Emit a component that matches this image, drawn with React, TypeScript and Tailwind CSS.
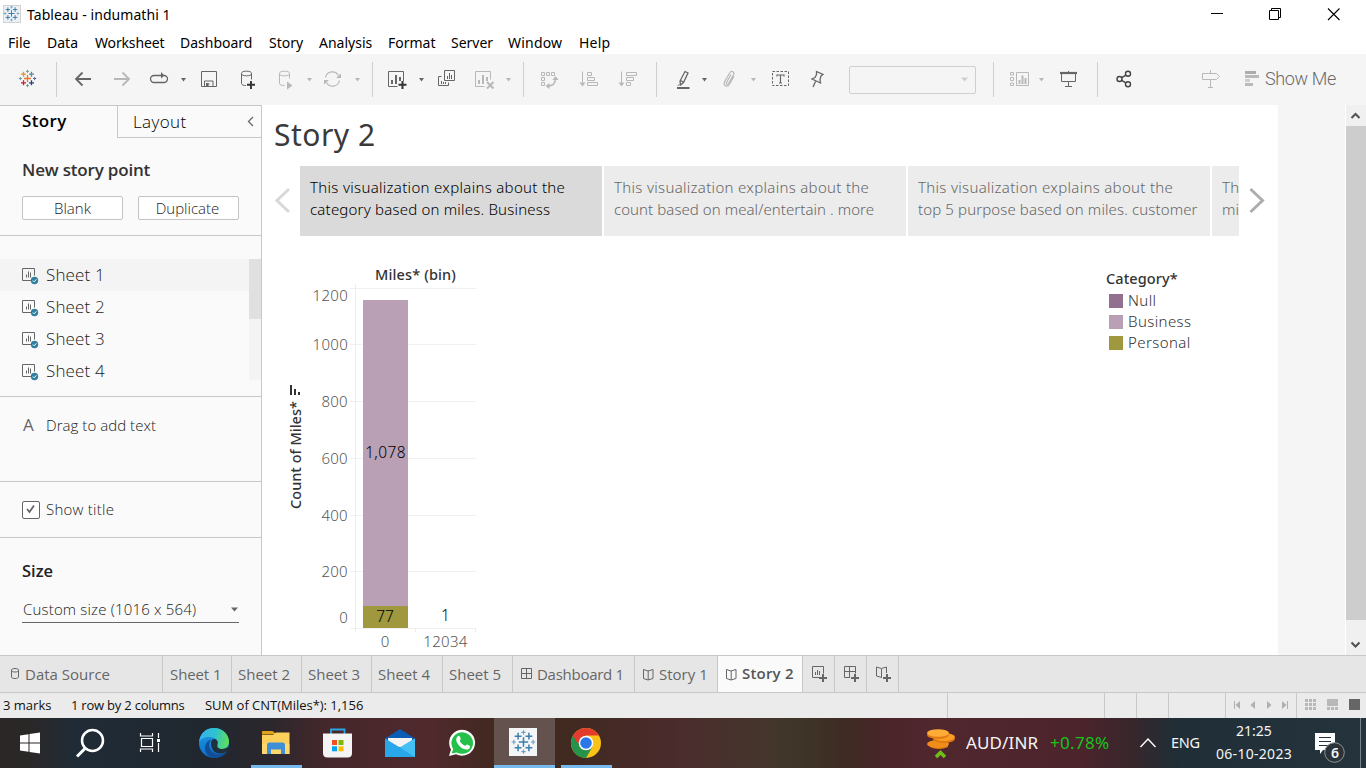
import type { ReactNode } from "react";

type ArtProps = { x: number; y?: number; w: number; h?: number; children?: ReactNode };

/* Icon cell: the viewBox is expressed in window coordinates. */
function Art({ x, y = 67, w, h = 25, children }: ArtProps) {
  return (
    <svg width={w} height={h} viewBox={`${x} ${y} ${w} ${h}`} fill="none" className="block shrink-0">
      {children}
    </svg>
  );
}

const DARK = "#666666";
const PALE = "#b8b8b8";

function Caret({ x, c = DARK }: { x: number; c?: string }) {
  return <path d={`M${x} 78h5l-2.5 3.5z`} fill={c} />;
}

function Sep() {
  return <div className="h-[35px] w-px shrink-0 bg-[#cfcfcf]" />;
}

function Plus({ x, y, r, c, sw }: { x: number; y: number; r: number; c: string; sw: number }) {
  return <path d={`M${x - r} ${y}h${2 * r}M${x} ${y - r}v${2 * r}`} stroke={c} strokeWidth={sw} />;
}

function Mark({ cx, cy, s, colors, sw }: { cx: number; cy: number; s: number; colors: string[]; sw: number }) {
  const p: [number, number, number, number][] = [
    [0, 0, 3.3, 0],
    [-3.8, -4.1, 2.4, 1],
    [3.8, -4.1, 2.4, 2],
    [-3.8, 4.1, 2.4, 3],
    [3.8, 4.1, 2.4, 4],
    [0, -6.8, 1.5, 5],
    [0, 6.8, 1.5, 5],
    [-6.8, 0, 1.5, 6],
    [6.8, 0, 1.5, 7],
  ];
  return (
    <>
      {p.map(([x, y, r, c], i) => (
        <Plus key={i} x={cx + x * s} y={cy + y * s} r={r * s} c={colors[c]} sw={i > 4 ? sw * 0.75 : sw} />
      ))}
    </>
  );
}

const BLUES = ["#3b7fae", "#3b7fae", "#3b7fae", "#3b7fae", "#3b7fae", "#6ba0c2", "#6ba0c2", "#6ba0c2"];

const MENU: [string, string][] = [
  ["File", "w-[39px]"],
  ["Data", "w-[48px]"],
  ["Worksheet", "w-[85px] tracking-[-0.15px]"],
  ["Dashboard", "w-[89px]"],
  ["Story", "w-[50px]"],
  ["Analysis", "w-[69px]"],
  ["Format", "w-[63px]"],
  ["Server", "w-[57px]"],
  ["Window", "w-[71px] tracking-[0.2px]"],
  ["Help", "w-[60px] tracking-[0.2px]"],
];

function TitleBar() {
  return (
    <div className="flex h-[30px] shrink-0 items-center">
      <Art x={0} y={0} w={27} h={30}>
        <rect x="3.5" y="5.5" width="17" height="17" fill="#eef1f3" stroke="#cfd3d6" />
        <Mark cx={11.5} cy={13.5} s={0.95} colors={BLUES} sw={1} />
      </Art>
      <span className="flex-1 pb-[2px] text-[14px] tracking-[0.06px] text-black">Tableau - indumathi 1</span>
      <Art x={1200} y={0} w={166} h={30}>
        <path d="M1211 13.5h12" stroke="#000" />
        <path d="M1269.5 10.5h9v9h-9zM1271.5 10v-1.500h9v9h-1.500" stroke="#000" />
        <path d="M1328 8.500l11.500 11.500M1339.500 8.500l-11.500 11.500" stroke="#000" strokeWidth="1.1" />
      </Art>
    </div>
  );
}

function Toolbar() {
  return (
    <div className="flex h-[51px] shrink-0 items-center bg-[#f5f5f5]">
      <Art x={0} w={56}>
        <Mark cx={27.5} cy={78.5} s={1.05} colors={["#e8762c", "#eb9129", "#5b879b", "#c72035", "#1f447e", "#7199a6", "#7199a6", "#5c6692"]} sw={1.3} />
      </Art>
      <Sep />
      <Art x={57} w={47}>
        <path d="M91 79H76M82.500 72.500L76 79l6.500 6.500" stroke={DARK} strokeWidth="1.8" />
      </Art>
      <Art x={104} w={38}>
        <path d="M114 79h15M122.500 72.500L129 79l-6.500 6.500" stroke={PALE} strokeWidth="1.8" />
      </Art>
      <Art x={142} w={51}>
        <path d="M162 82.500h2a3.500 3.500 0 0 0 0-7M162 82.500h-8a3.500 3.500 0 0 1 0-7h9" stroke={DARK} strokeWidth="1.3" />
        <path d="M161 72l3.500 3.500-3.500 3z" fill={DARK} />
        <Caret x={181} />
      </Art>
      <Art x={193} w={36}>
        <path d="M201.500 71.500h15v15h-15zM204.500 86v-5h8.500v5M206.500 86v-2h3" stroke={DARK} />
        <path d="M206 83h2.500v3H206z" fill={DARK} />
      </Art>
      <Art x={229} w={42}>
        <ellipse cx="246.500" cy="73.500" rx="5" ry="2.300" stroke={DARK} />
        <path d="M241.500 73.500v10c0 1.300 2 2 4.500 2M251.500 73.500v6" stroke={DARK} />
        <path d="M247 84.800h8M251 81v8" stroke="#333" strokeWidth="1.9" />
      </Art>
      <Art x={271} w={47}>
        <ellipse cx="284.500" cy="73.500" rx="5" ry="2.300" stroke={PALE} />
        <path d="M279.500 73.500v10c0 1.300 2 2 5 2M289.500 73.500v5" stroke={PALE} />
        <path d="M287 81.500l5.500 4-5.500 4z" fill={PALE} />
        <Caret x={307} c={PALE} />
      </Art>
      <Art x={318} w={54}>
        <path d="M325.500 77.500a7 7 0 0 1 13-2M339.500 80.500a7 7 0 0 1-13 2" stroke={PALE} strokeWidth="1.2" />
        <path d="M341 73.500v4.500h-5zM324 84.500V80h5z" fill={PALE} />
        <Caret x={355} c={PALE} />
      </Art>
      <Sep />
      <Art x={373} w={56}>
        <path d="M397.500 86.500h-9v-15h15v9.500" stroke={DARK} />
        <path d="M391 80h2v4h-2zM395 75h2v9h-2zM399 77h2v4h-2z" fill={DARK} />
        <path d="M398.500 84.800h8M402.500 81v8" stroke="#333" strokeWidth="2" />
        <Caret x={419} />
      </Art>
      <Art x={429} w={37}>
        <path d="M444.500 70.500h10v10h-10zM441.500 76.500h-3v9h10v-3" stroke={DARK} />
        <path d="M447.500 79v-3M449.500 79v-6M451.500 79v-4M441.500 84v-3M443.500 84v-2M445.500 84v-2" stroke={DARK} />
      </Art>
      <Art x={466} w={57}>
        <path d="M484.500 86.500h-9v-15h15v8" stroke={PALE} />
        <path d="M478 80h2v4h-2zM482 75h2v9h-2zM486 77h2v4h-2z" fill={PALE} />
        <path d="M487 82l6.500 6.500M493.500 82l-6.500 6.500" stroke={PALE} strokeWidth="2" />
        <Caret x={506} c={PALE} />
      </Art>
      <Sep />
      <Art x={524} w={45}>
        <path d="M541.500 72.500h3v3h-3zM546.500 72.500h3v3h-3zM551.500 72.500h3v3h-3zM541.500 77.500h3v3h-3zM541.500 82.500h3v3h-3z" stroke={PALE} />
        <path d="M555.500 78.500c0 5-3 7.500-8 7.500" stroke={PALE} strokeWidth="1.400" />
        <path d="M552.500 80l3-4 3 4zM549.500 83l-4 3 4 3z" fill={PALE} />
      </Art>
      <Art x={569} w={40}>
        <path d="M582.500 71.500v13M587.500 72.500h4v3h-4zM587.500 77.500h7v3h-7zM587.500 82.500h10v3h-10z" stroke={PALE} />
        <path d="M579.500 82.500h6l-3 4z" fill={PALE} />
      </Art>
      <Art x={609} w={47}>
        <path d="M621.500 71.500v13M626.500 72.500h10v3h-10zM626.500 77.500h7v3h-7zM626.500 82.500h4v3h-4z" stroke={PALE} />
        <path d="M618.500 82.500h6l-3 4z" fill={PALE} />
      </Art>
      <Sep />
      <Art x={657} w={55}>
        <path d="M685 71.500l3 1.500-4.500 9.500-3 2.500-.5-4zM680.500 80.500l3.500 2" stroke={DARK} strokeWidth="1.300" />
        <path d="M677 88h12.500" stroke={DARK} strokeWidth="2" />
        <path d="M677 85.500l2.500-1.500v1.500z" fill={DARK} />
        <Caret x={702} />
      </Art>
      <Art x={712} w={49}>
        <path d="M731 74.500l-4.500 8c-.8 1.600 1 2.500 2 1l5-8.500c1.500-3-2-5-3.800-2l-5 8.500c-2 4 2.500 6.500 4.800 2.800l4.500-8" stroke={PALE} strokeWidth="1.200" />
        <Caret x={751} c={PALE} />
      </Art>
      <Art x={761} w={38}>
        <rect x="772.500" y="71.500" width="16" height="14" stroke={DARK} strokeDasharray="2.500 1.500" />
        <path d="M777 76.500v-1.500h7v1.500M780.500 75v8M779 83h3" stroke={DARK} strokeWidth="1.200" />
      </Art>
      <Art x={799} w={50}>
        <path d="M816.500 71.500l6.500 3-2 1.500-1 3.500.5 3.500-8.500-4 3-1.500 1.500-3zM815.500 81.500l-2.500 5.500" stroke={DARK} strokeWidth="1.300" />
      </Art>
      <div className="flex h-7 w-[127px] shrink-0 items-center justify-end rounded-[2px] border border-[#cfcfcf] pr-[6px]">
        <Art x={961} y={77} w={8} h={5}>
          <path d="M961 77.500h7l-3.500 4z" fill="#cfcfcf" />
        </Art>
      </div>
      <div className="w-[17px] shrink-0" />
      <Sep />
      <Art x={994} w={56}>
        <path d="M1010.500 72.500h3v2.500h-3zM1010.500 77.500h3v3h-3zM1010.500 83h3v2.500h-3zM1016.500 72.500h12v13h-12z" stroke={PALE} />
        <path d="M1018.500 80h2v4h-2zM1021.500 75.500h2V84h-2zM1024.500 78h2v6h-2z" fill={PALE} />
        <Caret x={1039} c={PALE} />
      </Art>
      <Art x={1050} w={47}>
        <path d="M1060 73h17" stroke={DARK} strokeWidth="2.200" />
        <path d="M1061.500 74v7.500h14V74M1068.500 71v1M1068.500 82v4M1065 86.500h7" stroke={DARK} />
      </Art>
      <Sep />
      <Art x={1098} w={50}>
        <g stroke="#444" strokeWidth="1.400">
          <circle cx="1119.500" cy="79" r="2.500" />
          <circle cx="1128" cy="73.800" r="2.500" />
          <circle cx="1128" cy="84.200" r="2.500" />
          <path d="M1121.700 77.600l4.200-2.500M1121.700 80.400l4.200 2.500" />
        </g>
      </Art>
      <Art x={1148} w={117}>
        <path d="M1202.500 73.500h14l3 3-3 3h-14zM1210.500 70v3M1210.500 80v8M1208 87.500h5" stroke={PALE} />
        <path d="M1245 71h11v3h-11z" fill="#adadad" />
        <path d="M1245 79h5v3h-5z" fill="#cfcfcf" />
        <path d="M1245 75h14v3h-14zM1245 83h8v3h-8z" fill="#bababa" />
      </Art>
      <span className="pb-px font-['Roboto'] text-[18px] font-light leading-6 tracking-[-0.35px] text-[#6a6a6a]">Show Me</span>
    </div>
  );
}

function SidePanel() {
  return (
    <div className="flex w-[262px] shrink-0 flex-col border-r border-t border-[#c8c8c8] bg-[#fafafa] text-[#222]">
      <div className="flex h-8 shrink-0">
        <div className="w-[117px] pl-[22px] pt-[3px] text-[17px] font-semibold leading-6 tracking-[0.35px] text-black">Story</div>
        <div className="flex flex-1 justify-between border-b border-l border-[#c8c8c8] pl-[15px] text-[17px] font-light leading-8 tracking-[0.4px] text-black">
          <span>Layout</span>
          <Art x={246} y={105} w={15} h={30}>
            <path d="M253 116l-4.500 4.500 4.500 4.500" stroke={DARK} strokeWidth="1.300" />
          </Art>
        </div>
      </div>
      <div className="h-[98px] shrink-0 border-b border-[#c8c8c8] pl-[22px] pt-5">
        <div className="text-[17px] font-semibold leading-6 tracking-[-0.18px] text-[#333]">New story point</div>
        <div className="mt-[14px] flex gap-[15px] text-center text-[15px] font-light leading-[22px]">
          <div className="h-6 w-[101px] rounded-[2px] border border-[#c4c4c4] bg-white">Blank</div>
          <div className="h-6 w-[101px] rounded-[2px] border border-[#c4c4c4] bg-white pr-[2px]">Duplicate</div>
        </div>
      </div>
      <div className="flex h-[161px] shrink-0 border-b border-[#c8c8c8] pt-[23px]">
        <div className="flex-1">
          {[1, 2, 3, 4].map((n) => (
            <div key={n} className={n === 1 ? "flex h-8 items-center bg-[#f4f4f4]" : "flex h-8 items-center"}>
              <Art x={0} y={259} w={46} h={32}>
                <path d="M31 280.500h-8.500v-12h12v7" stroke={DARK} />
                <path d="M26.500 277.500v-3M28.500 277.500v-6M30.500 277.500v-5" stroke={DARK} />
                <circle cx="34.500" cy="280.500" r="3.700" fill="#2f7f9f" />
                <path d="M32.800 280.500l1.300 1.300 2.300-2.500" stroke="#fff" />
              </Art>
              <span className="text-[17px] font-light tracking-[0.15px]">Sheet {n}</span>
            </div>
          ))}
        </div>
        <div className="h-[121px] w-3 bg-[#f4f4f4]">
          <div className="h-[60px] bg-[#e0e0e0]" />
        </div>
      </div>
      <div className="flex h-[85px] shrink-0 border-b border-[#c8c8c8] pt-4">
        <span className="w-[46px] pl-[23px] text-[17px] leading-6 text-[#666]">A</span>
        <span className="text-[15px] font-light leading-[25px] tracking-[0.05px]">Drag to add text</span>
      </div>
      <div className="flex h-14 shrink-0 items-center border-b border-[#c8c8c8] pl-[22px]">
        <div className="flex size-[18px] items-center justify-center rounded-[2px] border border-[#666] bg-white">
          <Art x={0} y={0} w={16} h={16}>
            <path d="M4 7l2.500 3L11 3.500" stroke={DARK} strokeWidth="1.800" />
          </Art>
        </div>
        <span className="ml-[6px] pb-[2px] text-[15px] font-light leading-6 tracking-[0.25px]">Show title</span>
      </div>
      <div className="px-[22px] pt-[21px]">
        <div className="text-[16.5px] font-semibold leading-6">Size</div>
        <div className="mt-[14px] flex h-[26px] items-center justify-between border-b border-[#666] pl-px">
          <span className="pb-px text-[15px] font-light tracking-[0.18px]">Custom size (1016 x 564)</span>
          <Art x={0} y={0} w={8} h={5}>
            <path d="M0 .500h7L3.500 4.500z" fill={DARK} />
          </Art>
        </div>
      </div>
    </div>
  );
}

const POINTS: [string, string, string][] = [
  ["This visualization explains about the", "category based on miles. Business", "tracking-[0.2px]"],
  ["This visualization explains about the", "count based on meal/entertain . more", "tracking-[0.06px]"],
  ["This visualization explains about the", "top 5 purpose based on miles. customer", "tracking-[0.12px]"],
  ["This", "miles", "tracking-[0.1px]"],
];

const GRID: [number, string, number][] = [
  [288.5, "1200", 301],
  [344.5, "1000", 350],
  [401.5, "800", 407],
  [458.5, "600", 464],
  [515.5, "400", 521],
  [571.5, "200", 577],
  [628.5, "0", 623],
];

function Chart() {
  return (
    <svg width={300} height={400} viewBox="262 255 300 400" className="block shrink-0 font-['Noto_Sans']" fontSize="15">
      {GRID.map(([y, label, base]) => (
        <g key={label}>
          <path d={`M350 ${y}H476`} stroke="#f0f0f0" />
          <text x="348" y={base} textAnchor="end" fill="#555" fontWeight="300" letterSpacing="0.3">
            {label}
          </text>
        </g>
      ))}
      <path d="M355.500 284v348M415.500 628v4M475.500 628v4" stroke="#ececec" />
      <rect x="363" y="300" width="45" height="306" fill="#b9a0b4" />
      <rect x="363" y="606" width="45" height="22" fill="#9f983f" />
      <text x="415.500" y="280" textAnchor="middle" fill="#333" fontWeight="500" fontSize="14.500" letterSpacing="0.150">Miles* (bin)</text>
      <text x="385.500" y="458" textAnchor="middle" fill="#000" fontWeight="300" fontSize="15.500" letterSpacing="0.350">1,078</text>
      <text x="385" y="622" textAnchor="middle" fill="#000" fontWeight="300" fontSize="15.500">77</text>
      <text x="445.500" y="621" textAnchor="middle" fill="#000" fontWeight="300" fontSize="15.500">1</text>
      <text x="385" y="647" textAnchor="middle" fill="#555" fontWeight="300">0</text>
      <text x="445.500" y="647" textAnchor="middle" fill="#555" fontWeight="300" letterSpacing="0.300">12034</text>
      <text transform="translate(301 455) rotate(-90)" textAnchor="middle" fill="#333" fontWeight="500" fontSize="14.500">Count of Miles*</text>
      <path d="M290 385h2v10h-2zM294 389h2v6h-2zM298 392h2v3h-2z" fill="#333" />
    </svg>
  );
}

function Legend() {
  const items: [string, string][] = [
    ["Null", "bg-[#92708f]"],
    ["Business", "bg-[#b9a0b4]"],
    ["Personal", "bg-[#9f983f]"],
  ];
  return (
    <div className="w-[172px] pt-[12px]">
      <div className="pb-px text-[14.5px] font-medium leading-[22px] tracking-[0.1px] text-[#333]">Category*</div>
      {items.map(([label, tone]) => (
        <div key={label} className="flex h-[21px] items-center pl-[3px]">
          <div className={`size-[14px] ${tone}`} />
          <span className="ml-[5px] text-[15px] font-light tracking-[0.4px] text-[#333]">{label}</span>
        </div>
      ))}
    </div>
  );
}

function Canvas() {
  return (
    <div className="flex w-[1016px] shrink-0 flex-col overflow-hidden bg-white font-['Noto_Sans']">
      <div className="h-[61px] shrink-0 pl-3 text-[30px] leading-[60px] tracking-[0.5px] text-[#3a3a3a]">Story 2</div>
      <div className="flex h-[70px] shrink-0 items-center">
        <Art x={262} y={166} w={38} h={70}>
          <path d="M289 189l-12 11.500 12 11.500" stroke="#d8d8d8" strokeWidth="3" />
        </Art>
        <div className="flex w-[939px] gap-0.5 overflow-hidden">
          {POINTS.map(([a, b, tracking], i) => (
            <div
              key={i}
              className={
                i === 0
                  ? "h-[70px] w-[302px] shrink-0 whitespace-nowrap bg-[#dadada] px-[10px] pt-[10px] text-[15px] font-light leading-[22px] text-black"
                  : "h-[70px] w-[302px] shrink-0 whitespace-nowrap bg-[#ececec] px-[10px] pt-[10px] text-[15px] font-light leading-[22px] text-[#666]"
              }
            >
              <div className="tracking-[0.31px]">{a}</div>
              <div className={tracking}>{b}</div>
            </div>
          ))}
        </div>
        <Art x={1239} y={166} w={39} h={70}>
          <path d="M1250.500 189l12 11.500-12 11.500" stroke="#adadad" strokeWidth="3" />
        </Art>
      </div>
      <div className="flex justify-between pt-[19px]">
        <Chart />
        <Legend />
      </div>
    </div>
  );
}

function PageScroll() {
  return (
    <div className="flex w-[21px] flex-col border-l border-white bg-[#f0f0f0]">
      <Art x={1346} y={105} w={20} h={21}>
        <path d="M1351.500 118l4-4 4 4" stroke="#505050" strokeWidth="2" />
      </Art>
      <div className="h-[494px] bg-[#cdcdcd]" />
      <Art x={1346} y={620} w={20} h={35}>
        <path d="M1351.500 642.500l4 4 4-4" stroke="#505050" strokeWidth="2" />
      </Art>
    </div>
  );
}

const BOOK = "M1.500 1.500l4.500 1.500 5-1.500v9l-5 1.500-4.500-1.500zM6.200 3v9";

function SheetTabs() {
  const cell = "flex h-full shrink-0 items-center border-r border-[#c8c8c8]";
  return (
    <div className="flex h-[38px] shrink-0 border-y border-[#c8c8c8] bg-[#e6e6e6] text-[15px] text-[#666]">
      <div className={`${cell} w-[163px]`}>
        <Art x={0} y={656} w={25} h={36}>
          <path d="M11.500 670c0-2 7-2 7 0v7c0 2-7 2-7 0zM11.500 670.500c0 2 7 2 7 0" stroke={DARK} />
        </Art>
        <span>Data Source</span>
      </div>
      <div className={`${cell} w-[69px] pl-[7px] tracking-[-0.1px]`}>Sheet 1</div>
      <div className={`${cell} w-[70px] pl-[6px]`}>Sheet 2</div>
      <div className={`${cell} w-[70px] pl-[6px]`}>Sheet 3</div>
      <div className={`${cell} w-[71px] pl-[6px]`}>Sheet 4</div>
      <div className={`${cell} w-[70px] pl-[6px]`}>Sheet 5</div>
      <div className={`${cell} w-[122px]`}>
        <Art x={513} y={656} w={24} h={36}>
          <path d="M521.500 668.500h10v10h-10zM526.500 668.500v10M521.500 673.500h10" stroke={DARK} />
        </Art>
        <span className="tracking-[-0.27px]">Dashboard 1</span>
      </div>
      <div className={`${cell} w-[83px]`}>
        <Art x={-7} y={-12} w={24} h={36}>
          <path d={BOOK} stroke={DARK} />
        </Art>
        <span>Story 1</span>
      </div>
      <div className={`${cell} w-[85px] bg-[#fafafa]`}>
        <Art x={-7} y={-12} w={24} h={36}>
          <path d={BOOK} stroke={DARK} />
        </Art>
        <span className="pb-px font-semibold tracking-[0.2px] text-[#555]">Story 2</span>
      </div>
      <div className={`${cell} w-8`}>
        <Art x={803} y={656} w={31} h={36}>
          <path d="M819 677.500h-6.500v-11h11v7M815.500 675v-3M817.500 675v-5M819.500 675v-4" stroke={DARK} />
          <path d="M819 678h8M823 674v8" stroke={DARK} strokeWidth="2" />
        </Art>
      </div>
      <div className={`${cell} w-8`}>
        <Art x={835} y={656} w={31} h={36}>
          <path d="M850 677.500h-5.500v-11h11v7M849.500 667v10M845 671.500h10" stroke={DARK} />
          <path d="M851 678h8M855 674v8" stroke={DARK} strokeWidth="2" />
        </Art>
      </div>
      <div className={`${cell} w-8`}>
        <Art x={867} y={656} w={31} h={36}>
          <path d="M882 677.500l-5.500-1.500v-9l5 1.500 5-1.500v6M881.500 669v8" stroke={DARK} />
          <path d="M883 678h8M887 674v8" stroke={DARK} strokeWidth="2" />
        </Art>
      </div>
    </div>
  );
}

function StatusBar() {
  const cell = "h-full shrink-0 border-l border-[#c8c8c8]";
  return (
    <div className="flex h-[25px] shrink-0 items-center bg-[#ebebeb] text-[13px] text-[#111]">
      <span className="w-[71px] pl-[3px]">3 marks</span>
      <span className="w-[134px] tracking-[-0.22px]">1 row by 2 columns</span>
      <span className="flex-1 tracking-[-0.02px]">SUM of CNT(Miles*): 1,156</span>
      <div className={`${cell} w-[157px]`} />
      <div className={`${cell} w-8`} />
      <div className={`${cell} w-8`} />
      <div className={`${cell} w-[57px]`} />
      <div className={`${cell} w-[71px]`}>
        <Art x={1226} y={693} w={70} h={25}>
          <path d="M1234.500 701v8" stroke="#b0b0b0" />
          <path d="M1240 701v8l-4.500-4zM1255 701v8l-4.500-4zM1267 701v8l4.500-4zM1282 701v8l4.500-4z" fill="#b0b0b0" />
          <path d="M1287.500 701v8" stroke="#b0b0b0" />
        </Art>
      </div>
      <div className={`${cell} w-[70px]`}>
        <Art x={1297} y={693} w={69} h={25}>
          <path d="M1305 699h3v3h-3zM1309 699h3v3h-3zM1313 699h3v3h-3zM1305 703h3v3h-3zM1309 703h3v3h-3zM1313 703h3v3h-3zM1305 707h3v3h-3zM1309 707h3v3h-3zM1313 707h3v3h-3zM1327 699h11v7h-11zM1327 707h3v3h-3zM1331 707h3v3h-3zM1335 707h3v3h-3z" fill="#b8b8b8" />
          <path d="M1349 699h11v11h-11z" fill={DARK} />
        </Art>
      </div>
    </div>
  );
}

function Taskbar() {
  return (
    <div className="flex h-[50px] shrink-0 items-center bg-[linear-gradient(90deg,#2b2725_0px,#2a2728_30px,#1f2b36_75px,#20272f_200px,#2b272d_270px,#46272b_330px,#50292d_430px,#40291f_500px,#40291f_560px,#4a2b2c_670px,#46352c_760px,#3f372a_790px,#3e2a22_850px,#4b252b_890px,#51272e_940px,#4c242c_1080px,#38262b_1130px,#1f2e37_1180px,#24333c_1366px)] font-['Noto_Sans'] text-[#f5f5f5]">
      <Art x={0} y={718} w={60} h={50}>
        <path d="M20 735.500l8.500-1.200v8.200H20zM29.500 734.100l10.500-1.500v9.900H29.500zM20 743.500h8.500v8.200L20 750.500zM29.500 743.500H40v9.900l-10.500-1.500z" fill="#fff" />
      </Art>
      <Art x={60} y={718} w={60} h={50}>
        <circle cx="92.500" cy="740.500" r="10.500" stroke="#fff" strokeWidth="2.500" />
        <path d="M85 748.500l-8 8" stroke="#fff" strokeWidth="3" />
      </Art>
      <Art x={120} y={718} w={64} h={50}>
        <path d="M140.500 733v3h12v-3M140.500 752v-3h12v3M141.500 738.500h11v8h-11zM158.500 733v5M158.500 743v9" stroke="#fff" strokeWidth="1.200" />
        <path d="M157 739h3v3h-3z" fill="#fff" />
      </Art>
      <Art x={184} y={718} w={67} h={50}>
        <defs>
          <linearGradient id="edgeTop" x1="200" y1="736" x2="229" y2="742" gradientUnits="userSpaceOnUse">
            <stop offset="0" stopColor="#36b3ee" />
            <stop offset=".5" stopColor="#2fc2cf" />
            <stop offset="1" stopColor="#62e04e" />
          </linearGradient>
          <linearGradient id="edgeLow" x1="0" y1="0" x2="0" y2="1">
            <stop offset="0" stopColor="#1f9de0" />
            <stop offset="1" stopColor="#0f6fcf" />
          </linearGradient>
        </defs>
        <circle cx="214" cy="743" r="15" fill="url(#edgeLow)" />
        <path d="M199.200 742C200 733 206 728 214 728c9 0 15 6.500 15 13.500 0 5-3.500 7.500-7.500 7.500-3.500 0-5.500-1.300-4.500-2.500 2.500-3 0-9.500-7.500-9.500-5 0-8.800 2-10.300 5z" fill="url(#edgeTop)" />
        <path d="M211 739.500c-4 5.500-1 13 6 14.500 4 .8 7-.5 10.500-3-2.500 4.500-7.500 7-13 7-6 0-9.500-5-9.500-10 0-4 2.500-7.500 6-8.500z" fill="#114f99" />
        <path d="M211 743c0-3 2-4.500 4-4 2 .5 3.200 2.500 2.500 4.500-1 3 .5 5.500 4.500 5.500 2.500 0 4.500-.7 6-2l1.500 3-3.500 2c-3 1.500-6 2-8.500 1.300-4-1-6.500-5-6.500-10.300z" fill="#20303c" />
      </Art>
      <div className="flex h-full w-[51px] flex-col border-b-[3px] border-[#76b9ed]">
        <Art x={251} y={718} w={51} h={47}>
          <path d="M262.500 731H272q1.500 0 2.500 1.500l1.500 2H262v-3z" fill="#e0a21a" />
          <path d="M262 735h11l3-2.500h13.500V754H262z" fill="#fdd05c" />
          <path d="M262 744h27.500V754H262z" fill="#fddb78" opacity=".7" />
          <path d="M267 754v-9q0-2.500 2.500-2.500h13q2.500 0 2.500 2.500v9h-4v-4.500h-10V754z" fill="#3f8fd6" />
        </Art>
      </div>
      <Art x={302} y={718} w={67} h={50}>
        <path d="M331 735v-5.500h13.500v5.500" stroke="#2aa5e8" strokeWidth="1.800" />
        <path d="M323 733.500h29V753q0 4.500-4.500 4.500h-20q-4.500 0-4.500-4.500z" fill="#f4f4f4" />
        <path d="M332 740h5v5h-5z" fill="#f25022" />
        <path d="M338.500 740h5v5h-5z" fill="#7fba00" />
        <path d="M332 746.300h5v5h-5z" fill="#00a4ef" />
        <path d="M338.500 746.300h5v5h-5z" fill="#ffb900" />
      </Art>
      <Art x={369} y={718} w={61} h={50}>
        <path d="M385 738.500l15-9.500 15 9.500v5h-30z" fill="#0b5cb5" />
        <path d="M388 738h24v9h-24z" fill="#f4f4f4" />
        <path d="M385 738.500l15 9 15-9V757h-30z" fill="#28a8ea" />
        <path d="M415 738.500V757l-15-9.500z" fill="#45c0f4" />
      </Art>
      <Art x={430} y={718} w={64} h={50}>
        <path d="M449 756l2-6.500a13 13 0 1 1 5 4.700z" fill="#fff" />
        <path d="M451.500 753.500l1.700-4.500a10.800 10.800 0 1 1 3.600 3.400z" fill="#25c04a" />
        <path d="M457.500 736.500c1-1 2-.8 2.400.2l.9 2.100c.2.800-1.300 1.700-1 2.300 1.200 2.200 2.700 3.700 5 4.700.8.200 1.600-1.600 2.300-1.400l2.600 1.300c.8.500.2 2.500-1 3.200-2.300 1.400-6 .2-9-2.700-3-3-4.800-7-2.200-9.700z" fill="#fff" />
      </Art>
      <div className="flex h-full w-[61px] flex-col border-b-[3px] border-[#76b9ed] bg-[#64524f]">
        <Art x={494} y={718} w={61} h={47}>
          <path d="M509 728h28v28h-28z" fill="#f3f5f6" />
          <Mark cx={523.5} cy={742} s={1.42} colors={BLUES} sw={1.5} />
        </Art>
      </div>
      <div className="w-[6px] shrink-0" />
      <div className="flex h-full w-[51px] flex-col border-b-[3px] border-[#76b9ed]">
        <Art x={561} y={718} w={51} h={47}>
          <circle cx="586" cy="743" r="15" fill="#fbc116" />
          <path d="M573 735.500A15 15 0 0 0 586 758l6.500-11.300L586 743z" fill="#27924a" />
          <path d="M573 735.500a15 15 0 0 1 26 0H586v7.500h-8.700z" fill="#e33b2e" />
          <circle cx="586" cy="743" r="7.300" fill="#fff" />
          <circle cx="586" cy="743" r="5.800" fill="#2a78e8" />
        </Art>
      </div>
      <div className="flex-1" />
      <Art x={920} y={718} w={46} h={50}>
        <path d="M930 741h18v6q-9 4-18 0z" fill="#e07b12" />
        <ellipse cx="938" cy="744" rx="11" ry="4" fill="#f08c1a" />
        <ellipse cx="944" cy="739" rx="11" ry="4" fill="#e07b12" />
        <ellipse cx="944" cy="737" rx="11" ry="4" fill="#fb9d25" />
        <ellipse cx="938" cy="735" rx="11" ry="4" fill="#e07b12" />
        <ellipse cx="938" cy="733" rx="11" ry="3.800" fill="#ffab38" />
        <path d="M936 757l4.500-4.500 4.500 4.500" stroke="#6cc017" strokeWidth="3.500" />
      </Art>
      <span className="w-[84px] text-[17px] tracking-[0.12px]">AUD/INR</span>
      <span className="w-[74px] text-[17px] tracking-[0.3px] text-[#17c31b]">+0.78%</span>
      <Art x={1124} y={718} w={47} h={50}>
        <path d="M1140.500 747l7.500-8 7.500 8" stroke="#fff" strokeWidth="1.400" />
      </Art>
      <span className="w-[36px] text-[14.5px] tracking-[-0.3px]">ENG</span>
      <div className="w-[94px] pb-[2px] text-center text-[14px] leading-[23px]">
        <div>21:25</div>
        <div className="tracking-[0.3px]">06-10-2023</div>
      </div>
      <div className="relative h-full w-[59px] shrink-0">
        <Art x={1301} y={718} w={59} h={50}>
          <path d="M1315 733h20v17h-12l-3 4v-4h-5z" fill="#fff" />
          <path d="M1319 737.500h12M1319 741.500h12M1319 745.500h9" stroke="#24333c" />
          <circle cx="1334.500" cy="752.500" r="9.800" fill="#2c3338" stroke="#8c9499" />
        </Art>
        <span className="absolute left-[24px] top-[25px] w-5 text-center text-[14px] font-semibold leading-[20px]">6</span>
      </div>
      <div className="h-full w-[6px] border-l border-[#77828a]" />
    </div>
  );
}

export default function App() {
  return (
    <div className="flex h-[768px] w-[1366px] flex-col overflow-hidden bg-white font-['Open_Sans','Noto_Sans',sans-serif]">
      <div className="flex h-[54px] shrink-0 flex-col font-['Noto_Sans']">
        <TitleBar />
        <div className="flex h-6 pl-2 text-[14px] leading-[25px] text-black">
          {MENU.map(([label, w]) => (
            <span key={label} className={`${w} shrink-0`}>
              {label}
            </span>
          ))}
        </div>
      </div>
      <Toolbar />
      <div className="flex h-[550px] shrink-0">
        <SidePanel />
        <Canvas />
        <div className="flex-1 bg-[#f5f5f5]" />
        <PageScroll />
      </div>
      <SheetTabs />
      <StatusBar />
      <Taskbar />
    </div>
  );
}
